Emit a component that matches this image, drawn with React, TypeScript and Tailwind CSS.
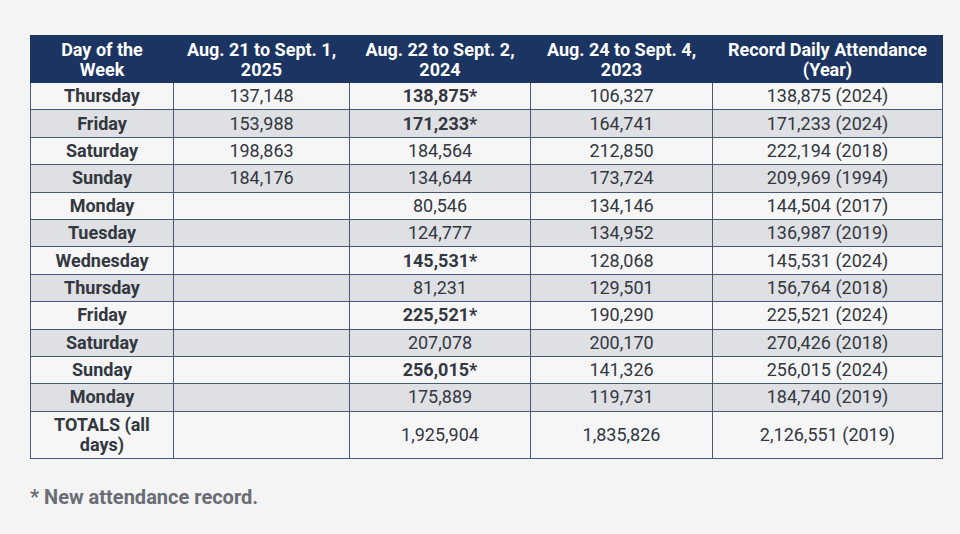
import React from 'react';

type Row = {
  day: string;
  y2025: string;
  y2024: string;
  record2024?: boolean;
  y2023: string;
  best: string;
};

const ROWS: Row[] = [
  { day: 'Thursday', y2025: '137,148', y2024: '138,875', record2024: true, y2023: '106,327', best: '138,875 (2024)' },
  { day: 'Friday', y2025: '153,988', y2024: '171,233', record2024: true, y2023: '164,741', best: '171,233 (2024)' },
  { day: 'Saturday', y2025: '198,863', y2024: '184,564', y2023: '212,850', best: '222,194 (2018)' },
  { day: 'Sunday', y2025: '184,176', y2024: '134,644', y2023: '173,724', best: '209,969 (1994)' },
  { day: 'Monday', y2025: '', y2024: '80,546', y2023: '134,146', best: '144,504 (2017)' },
  { day: 'Tuesday', y2025: '', y2024: '124,777', y2023: '134,952', best: '136,987 (2019)' },
  { day: 'Wednesday', y2025: '', y2024: '145,531', record2024: true, y2023: '128,068', best: '145,531 (2024)' },
  { day: 'Thursday', y2025: '', y2024: '81,231', y2023: '129,501', best: '156,764 (2018)' },
  { day: 'Friday', y2025: '', y2024: '225,521', record2024: true, y2023: '190,290', best: '225,521 (2024)' },
  { day: 'Saturday', y2025: '', y2024: '207,078', y2023: '200,170', best: '270,426 (2018)' },
  { day: 'Sunday', y2025: '', y2024: '256,015', record2024: true, y2023: '141,326', best: '256,015 (2024)' },
  { day: 'Monday', y2025: '', y2024: '175,889', y2023: '119,731', best: '184,740 (2019)' },
];

const HEADERS = [
  ['Day of the', 'Week'],
  ['Aug. 21 to Sept. 1,', '2025'],
  ['Aug. 22 to Sept. 2,', '2024'],
  ['Aug. 24 to Sept. 4,', '2023'],
  ['Record Daily Attendance', '(Year)'],
];

const cell = 'border border-[#4a5878] text-center p-0 leading-[20px]';

export default function App() {
  return (
    <div
      className="min-h-[534px] w-[960px] bg-[#f4f4f5] pl-[30px] pt-[35px] text-[#33373f]"
      style={{ fontFamily: 'Roboto, "Liberation Sans", sans-serif' }}
    >
      <table className="w-[912px] table-fixed border-collapse text-[18px]">
        <colgroup>
          <col className="w-[143px]" />
          <col className="w-[176px]" />
          <col className="w-[181px]" />
          <col className="w-[182px]" />
          <col className="w-[230px]" />
        </colgroup>
        <thead>
          <tr className="h-[47px] bg-[#1b3461] text-white">
            {HEADERS.map((h, i) => (
              <th key={i} className="border border-[#1b3461] p-0 pt-[1px] text-center font-bold leading-[20px]">
                {h[0]}
                <br />
                {h[1]}
              </th>
            ))}
          </tr>
        </thead>
        <tbody>
          {ROWS.map((r, i) => (
            <tr key={i} className={i % 2 === 0 ? 'h-[27.4px] bg-[#f6f6f7]' : 'h-[27.4px] bg-[#dfe0e4]'}>
              <td className={`${cell} font-bold`}>{r.day}</td>
              <td className={cell}>{r.y2025}</td>
              <td className={`${cell} ${r.record2024 ? 'font-bold' : ''}`}>
                {r.y2024}
                {r.record2024 && '*'}
              </td>
              <td className={cell}>{r.y2023}</td>
              <td className={cell}>{r.best}</td>
            </tr>
          ))}
          <tr className="h-[47px] bg-[#f6f6f7]">
            <td className={`${cell} font-bold`}>
              TOTALS (all
              <br />
              days)
            </td>
            <td className={cell}></td>
            <td className={cell}>1,925,904</td>
            <td className={cell}>1,835,826</td>
            <td className={cell}>2,126,551 (2019)</td>
          </tr>
        </tbody>
      </table>
      <p className="mt-[23px] text-[20px] font-bold text-[#6a6d74]">* New attendance record.</p>
    </div>
  );
}
